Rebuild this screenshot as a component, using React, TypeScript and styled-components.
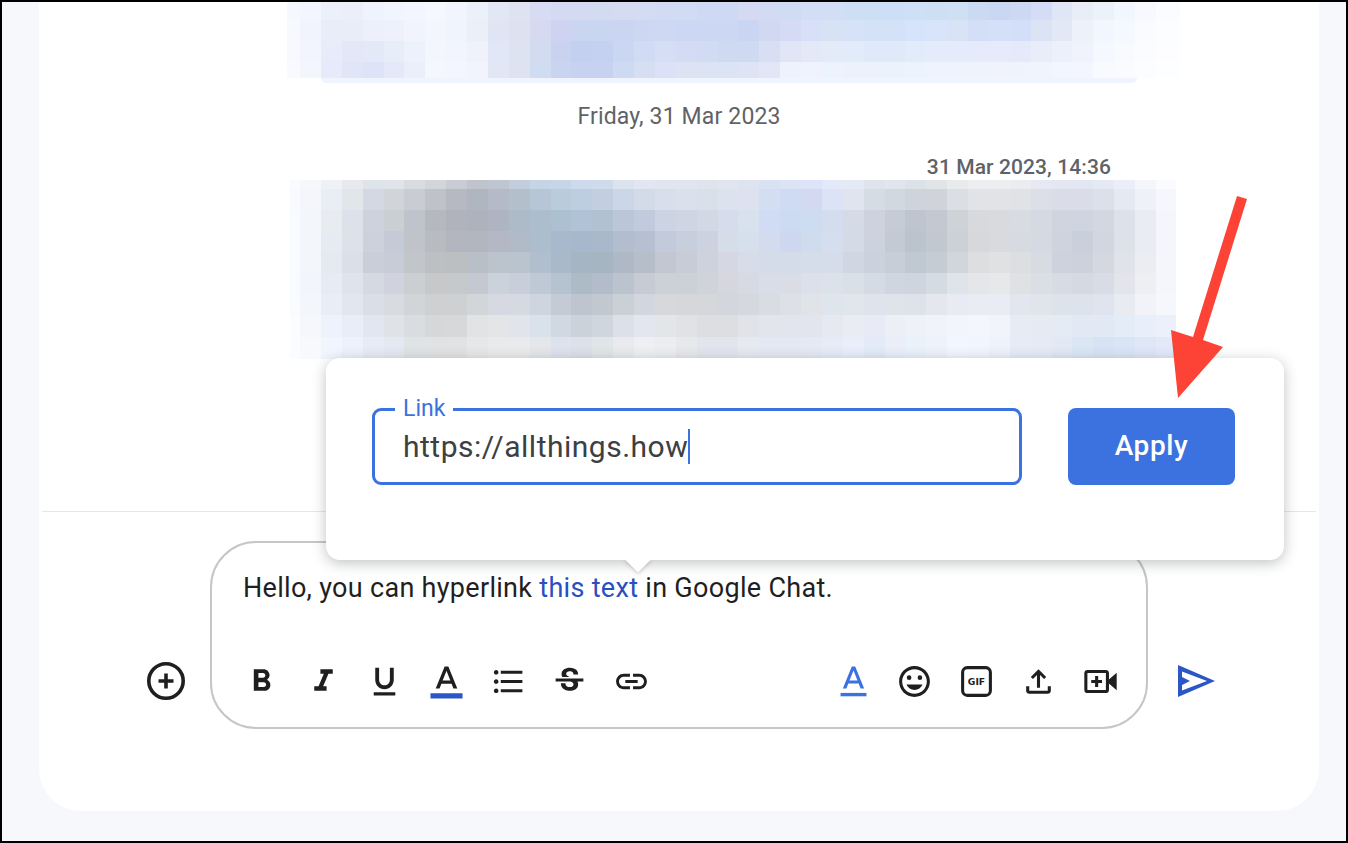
import React from "react";
import styled, { createGlobalStyle } from "styled-components";

const GlobalStyle = createGlobalStyle`
  html, body {
    margin: 0;
    padding: 0;
    background: #f6f8fc;
    font-family: Roboto, "Liberation Sans", sans-serif;
  }
`;

// the blurred-out messages: one string per row, one hex colour per cell
const topRows = [
  "f6f8ff f3f6fe ecf0fa eceffa eff3fe f1f5fe f3f6ff f5f8ff f2f5fe ecf0f8 e2e7f5 dfe3f1 d8dcf3 d3daf1 d3daf1 d3dbf1 d5dcf2 d4dcf3 d3dbf4 d2dbf4 cfd9f3 ced9f3 d6d9f2 d3daf3 d0dbf4 d2def5 d1def5 cedef5 cddff5 ccdff6 cde0f5 cedff4 cfdff4 cbd9f2 cad7f2 cdd8f2 d4ddf5 dfe6f5 e8edf8 ecf2fa f2f6fe f7f9fe fbfcff",
  "f7f9ff f1f4fd e9edf9 e8eef7 edf0fb eef1fb f1f4fd f3f6fe f0f4fd ebeff8 e0e5f4 dde1f0 d5daf0 cdd3f0 c9d5f1 c9d5f1 c9d5f1 cdd7f2 ced8f3 ccd8f3 cbd7f3 cbd7f3 c9d5f2 d0d8f2 d5dbf5 d8dff8 d7e2f5 d5e2f7 d4e2f8 d4e2f8 d6e4fb d7e4fa d8e3f6 d3dff7 d4e0f8 d3dff8 dbe3f5 e2e8f6 ecf1fa f2f6fe f5f8fe f9fbff fcfdff",
  "f7f9ff f2f5fd e8ecfa e3e7f8 e4e9f8 e8eef9 edf1fc f4f6fe f2f5fd eff2fb e1e7f6 dee3f1 d2dbf0 c9d3f0 c4d0ef c5d1f0 cbd6f2 d1dbf3 d5def5 d3dcf4 d1dbf3 cfdaf2 cfd9f2 d8dff2 e1e6f6 e4e9f8 e3ebf8 e2ebf9 e0e9f9 e0e9f9 e2ebfa e4ebfb e4ebfb e5ebfa e5ebfa e4eafa e8edf9 ecf0fa f0f3fc f5f8fe f8fafe fbfcff fdfdff",
  "f8faff f3f6fd e6eafa e0e6f7 dee4f7 e3e9f8 ebeffa f4f7fe f3f6fe f1f4fc e1e7f5 dee3f1 cfdcf1 c9d4f0 c6d2ef c6d2ef ced9f2 d6dff2 dbe1f6 dde3f3 dbe3f4 dbe4f4 dfe3f6 e2e7f8 eef2fd f0f3fd ecf3fc ebf2fc ebf2fc eaf2fc ebf3fd eff3fd f0f3fd eff3fc f0f3fc eff3fc f1f4fd f2f6fe f3f6fe f8fafe fafbff fcfdff fdfeff",
];

const lowerRows = [
  "fafbff f5f7fb eef1f6 e7e9ee dfe3ea e0e3e8 d8dbe0 d2d5da c9ccd2 c0c4cd bfc6d2 c3cedc c6d5e6 c6d6e8 ccdaec cedbea dbe3ef e1e6f2 e1e5ef e0e5ee dfe4ec e0e5ee dee3f0 d9e1f3 dbe3f5 dde3f8 e4e9f9 e5e9f5 dfe4ec e0e6ec dce3e8 e1e5e8 e8ebec edeef1 edeef0 ebecf0 e7e9f2 e4e7f2 e3e7f3 e5e9f4 ebeef8 f4f6fb fafbfe",
  "f8faff f4f6fc e8edf6 e2e5ea d3d8e2 d1d5da c9ccd2 bfc2c8 b6b9c2 b0b6c0 b4bac8 b4bfcc b6c6d6 b8ccdc bccedf c3cfe0 cbd7e6 d3dbe8 d8deec dae0ec dae0ea dde3ee dee2f0 d4def2 cfdaf3 d3d9f1 dde3f6 dfe4ee d6dce4 d2d8e0 cdd4dc d0d3da dbdee2 e2e3e6 e2e3e6 e0e2e6 dcdfe8 dadde8 dadde8 dce0eb e5e9f2 eef1f8 f6f7fc",
  "f8fbff f3f6fb e8ebef dde2ea cdd2dd c9cfd3 bfc3cc b5b8be b0b3bc adb2bc aeb4c2 adbac8 acbece acc0d2 b0c2d6 b2c1d2 bcc6d9 c2cadd ccd3e2 cfd5e2 d2d8e4 d6dceb d8e2ef d0dcf3 ccdaf2 cedcf2 d4dded d4dae6 cdd2de c6ccd6 bec5cf c4c8d0 cfd2d7 d8d9dc d9dadd d8dbe2 d5d9e2 cfd4df ced4e0 d2d7e2 dde1ea e9ecf3 f5f6fb",
  "f8fbff f3f6fb e6ebf3 dce1ea ccd1dc c5cbd6 c0c3c9 b8bbc0 b3b6be b2b6be b3b8c4 b1bbc8 acbdcd a9b9cd a8b8cc a9b8ca b2bdce b6c0d0 c3cadb c7cedc ccd2df d4dde8 d6e0ec d2dcee cdd8f0 cfdcee d4deee d4dae6 ccd2de c4cad4 bbc3cd c1c8d0 ccd0d7 d6d8db d8dadd d7dae1 d5d9e2 ced3de c9d0dc d1d6e0 dde1ea e9ecf3 f5f6fb",
  "f8fbff f3f6fb e5e9f2 dadfe8 c9ced9 c7ccd6 c2c5c9 bdc0c3 bcbfc2 b8bfc6 bbc3cd b9c4ce b0bece a9b9c9 a6b5c4 a6b5c2 afb8c5 b6bec9 c2c7d1 c7ccd6 ced2dc d5d8e2 d6dce8 d4dcea d4dcea d5ddeb d6ddea d1d7e2 cbd2de c7ced7 c0c8d2 c6ccd4 d1d5dc dcdee0 dfe1e3 dcdee1 d8dbe2 ced2dc cdd1dc d5d8e0 e0e3ea ebedf3 f5f6fb",
  "f8fbff f2f6fc e6ebf5 dfe3ec d5d9e2 d0d3dd cbcfd2 c7c8ca c6c9cb c5c8d0 ccd2dc c9cfda bec9d5 b5c3d1 adbbc6 b3bccb bbc4ce c6cbd4 cbd1d7 ccd1d8 d0d3da d6d7de d7dae2 d9dde7 dadde6 dbe0ea dbe2ea d9e0e8 d4dbe4 cfd6e0 ced5df d5dbe2 dfe3ea e4e6e9 e6e8ea dfe1e5 dcdee5 d7dce4 d4d9e2 d9dce4 e3e5ea eeeff2 f5f6fb",
  "f9fbff f3f6fb e9edf6 e2e6ef dadee6 d8dbdf d1d5d8 cfd0d2 cfd0d2 d3d6d8 d6d9e1 d5dae2 ced5de c4cbd7 bec5cf c1c8d0 c9d1d7 d1d6df d7d8db d6d7da d6d7da d4d6dd d6d8df dadce4 dde0e6 e0e3e8 dee5ec e0e6ec dfe3ec dfe3ea dee2ea e5e7ee e8ebf3 e9ecf3 e9ecf4 e3e6ee e0e5ec dce3ea dde3ec dfe4ee e8ebf2 f1f3f8 f6f7fc",
  "fafcff f5f7fd eef2fc e8edf7 e1e6f0 dfe2e7 d9dde0 d6d7d9 d7d8da e2e3e4 e3e5e7 e2e4ec d9e2ea d0d9e2 cbd2da d0d6de dce0e8 e3e6ee e3e6e9 e1e2e5 dddee1 dddee2 e1e3e9 e2e5eb e2e5ed e2e5ee e6e9f2 eaecf4 e8ebf6 ecf0f6 eef2f8 f0f3fa f2f5fd f3f6fd f1f4fb e7ebf4 e6ebf3 e5ebf4 e2e9f4 e1e9f5 e4ecf7 e8eefa ebf0fa",
  "fbfcff f7f9fd f1f5fe ecf2fc e6ebf5 e4e8f2 dfe3e5 e1e2e4 e1e2e4 e6e7e9 e9eaec e9eaec e4e6ea dee2ec dbe0e9 e0e5e8 e8eaee edeff3 ebedf1 e6e8ec e2e5ee e2e5ee e6e9ef e4e8f2 e4e8f2 e4e9f3 e6ecf7 e8eefa e3eaf8 e9eef8 e9f1fa edf2fb f2f6fe f1f5fd eef2fb e6ecf7 e5ebf5 e2e8f4 dbe6f5 d7e3f5 d9e4f6 dee6f8 e2eafa",
];

const Frame = styled.div`
  position: relative;
  box-sizing: border-box;
  width: 1348px;
  height: 843px;
  overflow: hidden;
  border: 2px solid #000;
  padding: 0 27px 0 37px;
  background: #f6f8fc;
`;

const Card = styled.main`
  display: flex;
  flex-direction: column;
  width: 1280px;
  height: 809px;
  border-radius: 0 0 42px 42px;
  background: #fff;
`;

const Feed = styled.section`
  display: flex;
  flex-direction: column;
  height: 509px;
`;

const Mosaic = styled.div<{ $left: number; $first: number; $last: number; $rows: string }>`
  display: grid;
  flex: none;
  margin-left: ${(p) => p.$left}px;
  grid-template-columns: ${(p) => p.$first}px repeat(41, 20.88px) ${(p) => p.$last}px;
  grid-template-rows: ${(p) => p.$rows};
  filter: blur(0.6px);
`;

const BubbleTail = styled.div`
  width: 816px;
  height: 5px;
  margin-left: 282px;
  border-radius: 0 0 16px 16px;
  background: #f0f4fe;
`;

const DateLabel = styled.div`
  margin-top: 20px;
  font-size: 23px;
  line-height: 28px;
  letter-spacing: 0.15px;
  text-align: center;
  color: #5f6368;
`;

const Timestamp = styled.div`
  margin: 24px 208px 1px 0;
  font-size: 21px;
  font-weight: 500;
  line-height: 24px;
  letter-spacing: 0.1px;
  text-align: right;
  color: #5f6368;
`;

const Separator = styled.hr`
  flex: none;
  width: 1274px;
  height: 1px;
  margin: 0 0 0 3px;
  border: 0;
  background: #e4e6ea;
`;

const ComposerRow = styled.div`
  display: flex;
  align-items: flex-end;
  margin-top: 29px;
  padding-left: 108px;
`;

const SideIcon = styled.svg<{ $size: number; $left: number; $bottom: number }>`
  flex: none;
  width: ${(p) => p.$size}px;
  height: ${(p) => p.$size}px;
  margin-left: ${(p) => p.$left}px;
  margin-bottom: ${(p) => p.$bottom}px;
`;

const Composer = styled.div`
  box-sizing: border-box;
  display: flex;
  flex: none;
  flex-direction: column;
  width: 938px;
  height: 188px;
  margin-left: 25px;
  padding: 30px 27.5px 0 31px;
  border: 2px solid #c4c7c5;
  border-radius: 46px;
  background: #fff;
`;

const Message = styled.p`
  margin: 0;
  font-size: 27px;
  line-height: 30px;
  letter-spacing: 0.3px;
  color: #1f1f1f;
`;

const InlineLink = styled.a`
  color: #2a4fbf;
`;

const Toolbar = styled.div`
  display: flex;
  justify-content: space-between;
  margin-top: 59.5px;
`;

const ToolGroup = styled.div`
  display: flex;
  gap: 24.7px;
`;

const Tool = styled.svg`
  display: block;
  width: 37px;
  height: 37px;
  fill: #1f1f1f;
`;

const Popover = styled.div`
  position: absolute;
  left: 324px;
  top: 356px;
  box-sizing: border-box;
  display: flex;
  gap: 46px;
  width: 958px;
  height: 202px;
  padding: 50px 49px 0 46px;
  border-radius: 14px;
  background: #fff;
  box-shadow: 0 3px 14px rgba(60, 64, 67, 0.32);
`;

const PopoverNub = styled.div`
  position: absolute;
  left: 301px;
  bottom: -8px;
  width: 22px;
  height: 22px;
  background: #fff;
  transform: rotate(45deg);
  box-shadow: 3px 3px 4px -2px rgba(60, 64, 67, 0.25);
`;

const Field = styled.div`
  position: relative;
  box-sizing: border-box;
  display: flex;
  align-items: center;
  width: 650px;
  height: 77px;
  padding-left: 28px;
  border: 3px solid #3b72e0;
  border-radius: 9px;
`;

const FieldLabel = styled.span`
  position: absolute;
  left: 20px;
  top: -14px;
  padding: 0 8px;
  font-size: 23px;
  line-height: 24px;
  color: #3b72e0;
  background: #fff;
`;

const FieldValue = styled.span`
  font-size: 30px;
  line-height: 35px;
  letter-spacing: 0.5px;
  color: #3c4043;
  border-right: 2px solid #3b72e0;
`;

const ApplyButton = styled.button`
  flex: none;
  width: 167px;
  height: 77px;
  padding: 0 0 2px;
  border: 0;
  border-radius: 8px;
  font-family: Roboto, "Liberation Sans", sans-serif;
  font-size: 28px;
  font-weight: 500;
  letter-spacing: 0.6px;
  color: #fff;
  background: #3b72e0;
`;

const Annotation = styled.svg`
  position: absolute;
  left: -2px;
  top: -2px;
  width: 1348px;
  height: 843px;
  pointer-events: none;
`;

const MosaicBlock: React.FC<{
  rows: string[];
  left: number;
  first: number;
  last: number;
  heights: string;
}> = ({ rows, left, first, last, heights }) => (
  <Mosaic $left={left} $first={first} $last={last} $rows={heights}>
    {rows.flatMap((row, r) =>
      row.split(" ").map((hex, c) => <div key={`${r}-${c}`} style={{ background: `#${hex}` }} />),
    )}
  </Mosaic>
);

const App: React.FC = () => {
  return (
    <>
      <GlobalStyle />
      <Frame>
        <Card>
          <Feed>
            <MosaicBlock rows={topRows} left={248} first={13} last={24} heights="18px 21px 21px 16px" />
            <BubbleTail />
            <DateLabel>Friday, 31 Mar 2023</DateLabel>
            <Timestamp>31 Mar 2023, 14:36</Timestamp>
            <MosaicBlock
              rows={lowerRows}
              left={251}
              first={10}
              last={20}
              heights="9px 21px 21px 21px 21px 21px 21px 22px 22px"
            />
          </Feed>
          <Separator />
          <ComposerRow>
            <SideIcon $size={38} $left={0} $bottom={29} viewBox="0 0 38 38">
              <circle cx="19" cy="19" r="17.2" fill="none" stroke="#1f1f1f" strokeWidth="3.6" />
              <path d="M17.2 11.5h3.6v5.7h5.7v3.6h-5.7v5.7h-3.6v-5.7h-5.7v-3.6h5.7z" fill="#1f1f1f" />
            </SideIcon>
            <Composer>
              <Message>
                Hello, you can hyperlink <InlineLink>this text</InlineLink> in Google Chat.
              </Message>
              <Toolbar>
                <ToolGroup>
                  <Tool viewBox="0 0 24 24">
                    <path d="M15.6 10.79c.97-.67 1.65-1.77 1.65-2.79 0-2.26-1.75-4-4-4H7v14h7.04c2.09 0 3.71-1.7 3.71-3.79 0-1.52-.86-2.82-2.15-3.42zM10 6.5h3c.83 0 1.5.67 1.5 1.5s-.67 1.5-1.5 1.5h-3v-3zm3.5 9H10v-3h3.5c.83 0 1.5.67 1.5 1.5s-.67 1.5-1.5 1.5z" />
                  </Tool>
                  <Tool viewBox="0 0 24 24">
                    <path d="M10 4v3h2.21l-3.42 8H6v3h8v-3h-2.21l3.42-8H18V4z" />
                  </Tool>
                  <Tool viewBox="0 0 24 24">
                    <path d="M12 17c3.31 0 6-2.69 6-6V3h-2.5v8c0 1.93-1.57 3.5-3.5 3.5S8.5 12.93 8.5 11V3H6v8c0 3.31 2.69 6 6 6zm-7 2v2h14v-2H5z" />
                  </Tool>
                  <Tool viewBox="0 0 24 24">
                    <path d="M10.8 2.3 5 16.6h2.5l1.2-3.2h6.6l1.2 3.2H19L13.2 2.3h-2.4zm-1.3 9L12 5l2.5 6.3h-5z" />
                    <path d="M1.6 19.6h20.8v3.4H1.6z" fill="#2a56c6" />
                  </Tool>
                  <Tool viewBox="0 0 24 24">
                    <path d="M4 10.5c-.83 0-1.5.67-1.5 1.5s.67 1.5 1.5 1.5 1.5-.67 1.5-1.5-.67-1.5-1.5-1.5zm0-6c-.83 0-1.5.67-1.5 1.5S3.17 7.5 4 7.5 5.5 6.83 5.5 6 4.83 4.5 4 4.5zm0 12c-.83 0-1.5.68-1.5 1.5s.68 1.5 1.5 1.5 1.5-.68 1.5-1.5-.67-1.5-1.5-1.5zM7 19h14v-2H7v2zm0-6h14v-2H7v2zm0-8v2h14V5H7z" />
                  </Tool>
                  <Tool viewBox="0 0 24 24">
                    <path d="M6.85 7.08C6.85 4.37 9.45 3 12.24 3c1.64 0 3 .49 3.9 1.28.77.65 1.46 1.73 1.46 3.24h-3.01c0-.31-.05-.59-.15-.85-.29-.86-1.2-1.28-2.25-1.28-1.86 0-2.34 1.02-2.34 1.7 0 .48.25.88.74 1.21.38.25.77.48 1.41.7H7.39c-.21-.34-.54-.89-.54-1.92zM21 12v-2H3v2h9.62c1.15.45 1.96.75 1.96 1.97 0 1-.81 1.67-2.28 1.67-1.54 0-2.93-.54-2.93-2.51H6.4c0 .55.08 1.13.24 1.58.81 2.29 3.29 3.3 5.67 3.3 2.27 0 5.3-.89 5.3-4.05 0-.3-.01-1.16-.48-1.94H21V12z" />
                  </Tool>
                  <Tool viewBox="0 0 24 24">
                    <path d="M3.9 12c0-1.71 1.39-3.1 3.1-3.1h4V7H7c-2.76 0-5 2.24-5 5s2.24 5 5 5h4v-1.9H7c-1.71 0-3.1-1.39-3.1-3.1zM8 13h8v-2H8v2zm9-6h-4v1.9h4c1.71 0 3.1 1.39 3.1 3.1s-1.39 3.1-3.1 3.1h-4V17h4c2.76 0 5-2.24 5-5s-2.24-5-5-5z" />
                  </Tool>
                </ToolGroup>
                <ToolGroup>
                  <Tool viewBox="0 0 24 24">
                    <path d="M10.9 2.3 5.1 16.6h2.3l1.25-3.3h6.7l1.25 3.3h2.3L13.1 2.3h-2.2zm-1.5 9L12 4.8l2.6 6.5H9.4z" fill="#3b72e0" />
                    <path d="M3.6 19.4h16.8v2.2H3.6z" fill="#3b72e0" />
                  </Tool>
                  <Tool viewBox="0 0 24 24">
                    <path d="M11.99 2C6.47 2 2 6.48 2 12s4.47 10 9.99 10C17.52 22 22 17.52 22 12S17.52 2 11.99 2zM12 20c-4.42 0-8-3.58-8-8s3.58-8 8-8 8 3.58 8 8-3.58 8-8 8z" />
                    <circle cx="15.5" cy="9.5" r="1.5" />
                    <circle cx="8.5" cy="9.5" r="1.5" />
                    <path d="M12 17.5c2.33 0 4.31-1.46 5.11-3.5H6.89c.8 2.04 2.78 3.5 5.11 3.5z" />
                  </Tool>
                  <Tool viewBox="0 0 24 24">
                    <rect x="3" y="3" width="18" height="18" rx="3" fill="none" stroke="#1f1f1f" strokeWidth="2" />
                    <text x="12" y="14.3" textAnchor="middle" fontFamily="'DejaVu Sans', sans-serif" fontSize="6" fontWeight="700">
                      GIF
                    </text>
                  </Tool>
                  <Tool viewBox="0 0 24 24">
                    <path d="M18 15v3H6v-3H4v3c0 1.1.9 2 2 2h12c1.1 0 2-.9 2-2v-3h-2zM7 9l1.41 1.41L11 7.83V16h2V7.83l2.59 2.58L17 9l-5-5-5 5z" />
                  </Tool>
                  <Tool viewBox="0 0 24 24">
                    <rect x="2.5" y="5.5" width="14" height="13" rx="1.2" fill="none" stroke="#1f1f1f" strokeWidth="2" />
                    <path d="M16.5 11.5 22.5 6.4v11.2l-6-5.1zM8.5 8.5h2v2.5H13v2h-2.5v2.5h-2V13H6v-2h2.5z" />
                  </Tool>
                </ToolGroup>
              </Toolbar>
            </Composer>
            <SideIcon $size={42} $left={27} $bottom={27} viewBox="0 0 42 42">
              <path d="M3 5 40 21 3 37zM7 11.5 32 21 7 30.5V25L15 21 7 17z" fill="#2a56c6" fillRule="evenodd" />
            </SideIcon>
          </ComposerRow>
        </Card>
        <Popover>
          <Field>
            <FieldLabel>Link</FieldLabel>
            <FieldValue>https://allthings.how</FieldValue>
          </Field>
          <ApplyButton>Apply</ApplyButton>
          <PopoverNub />
        </Popover>
        <Annotation viewBox="0 0 1348 843">
          <path d="M1237 196 1247 199 1203 340 1223 347 1178 398 1171 330 1193 337z" fill="#fd4335" />
        </Annotation>
      </Frame>
    </>
  );
};

export default App;
